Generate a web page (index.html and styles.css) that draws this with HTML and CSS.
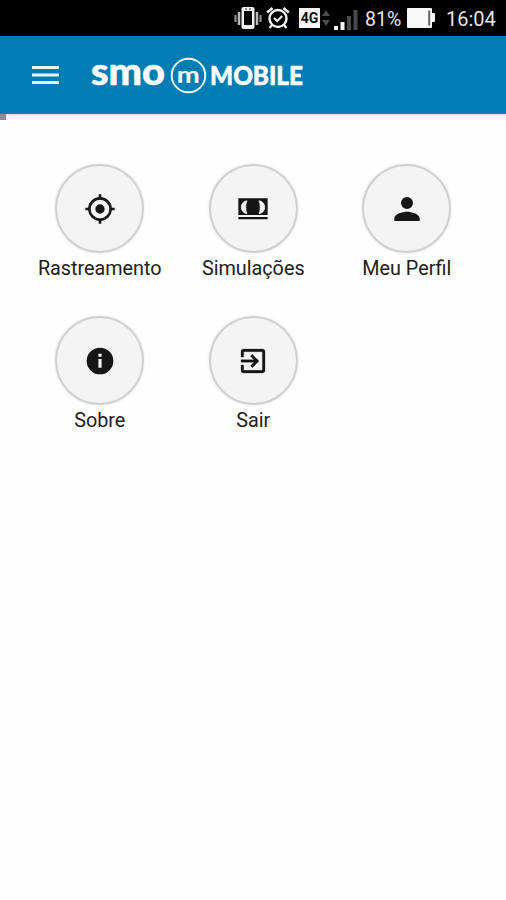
FILE: index.html
```html
<!DOCTYPE html>
<html lang="pt-BR">
<head>
<meta charset="utf-8">
<title>SMO Mobile</title>
<link rel="stylesheet" href="styles.css">
</head>
<body>
<div class="status">
  <svg class="vibrate" width="28" height="26" viewBox="0 0 28 26"><rect x="7.500" y="2" width="13" height="22" rx="2" fill="#f2f2f2"/><rect x="10" y="6" width="8" height="14" fill="#050505"/><path d="M11 4h2M15 4h2" stroke="#222" stroke-width="1"/><path d="M5 7v13M23 7v13" stroke="#bbb" stroke-width="2.500"/><path d="M1.500 10v7M26.500 10v7" stroke="#999" stroke-width="2"/></svg>
  <svg class="alarm" width="24" height="24" viewBox="0 0 24 24" fill="none" stroke="#f2f2f2"><circle cx="12" cy="12.500" r="8.500" stroke-width="2.400"/><path d="M1.200 6.500 6.500 2M22.800 6.500 17.500 2" stroke-width="2.600"/><path d="m8 12 3.200 3 5-5" stroke-width="2"/><path d="m6 19-2.500 3M18 19l2.500 3" stroke-width="2.200"/></svg>
  <span class="network">4G</span>
  <svg class="arrows" width="8" height="20" viewBox="0 0 8 20" fill="#4c4c4c"><path d="M4 2l4 6H0zM4 18l4-6H0z"/></svg>
  <svg class="signal" width="25" height="22" viewBox="0 0 25 22"><path d="M1 18h4v4H1zM7.500 14h4v8h-4z" fill="#f4f4f4"/><path d="M14 8h4v14h-4zM20.500 2h4v20h-4z" fill="#4a4a4a"/></svg>
  <span class="percent">81%</span>
  <svg class="battery" width="28" height="20" viewBox="0 0 28 20"><path d="M1 0h23q1 0 1 1v4h2q1 0 1 1v7q0 1-1 1h-2v5q0 1-1 1H1q-1 0-1-1V1q0-1 1-1z" fill="#f8f8f8"/><path d="M22.200 2.500v15" stroke="#666" stroke-width="2"/></svg>
  <span class="clock">16:04</span>
</div>
<header class="appbar">
  <svg class="menu" width="27" height="20" viewBox="0 0 27 20" fill="#e6f5fb"><path d="M0 1h27v3H0zM0 8.500h27v3H0zM0 16h27v3H0z"/></svg>
  <svg class="logo" width="218" height="60" viewBox="0 -10 218 60">
    <text class="smo" x="1" y="30.200" textLength="74" lengthAdjust="spacingAndGlyphs">smo</text>
    <circle cx="98.500" cy="20.500" r="16.800" fill="none" stroke="#e8f8ff" stroke-width="2"/>
    <text class="em" x="86.800" y="27.600" textLength="23" lengthAdjust="spacingAndGlyphs">m</text>
    <text class="mobile" x="120" y="29.500" textLength="93" lengthAdjust="spacingAndGlyphs">MOBILE</text>
  </svg>
</header>
<div class="progress"><div class="progress-value"></div></div>
<main class="grid">
  <div class="item"><div class="circle"><svg viewBox="0 0 24 24"><path d="M12 8.500a3.500 3.500 0 1 0 0 7 3.500 3.500 0 0 0 0-7zm8.940 2.500A8.990 8.990 0 0 0 13 3.060V1h-2v2.060A8.990 8.990 0 0 0 3.060 11H1v2h2.060A8.990 8.990 0 0 0 11 20.940V23h2v-2.060A8.990 8.990 0 0 0 20.940 13H23v-2zM12 19a7 7 0 1 1 0-14 7 7 0 0 1 0 14z"/></svg></div><span class="label">Rastreamento</span></div>
  <div class="item"><div class="circle"><svg viewBox="0 0 24 24"><path d="M1 4h22v12.500H1zM1 18h22v1.600H1z"/><path d="M7.500 5.800C1.800 6.500 1.800 14.800 7.500 15.500C6.300 13 6.300 8.300 7.500 5.800zM16.500 5.800C22.200 6.500 22.200 14.800 16.500 15.500C17.700 13 17.700 8.300 16.500 5.800z" fill="#f4f4f4" stroke="#f4f4f4" stroke-width=".5"/></svg></div><span class="label">Simulações</span></div>
  <div class="item"><div class="circle"><svg viewBox="0 0 24 24"><path d="M12 12a4.500 4.500 0 1 0 0-9 4.500 4.500 0 0 0 0 9zm0 2c-3 0-9.500 1.500-9.500 5v2h19v-2c0-3.500-6.500-5-9.500-5z"/></svg></div><span class="label">Meu Perfil</span></div>
  <div class="item"><div class="circle"><svg viewBox="0 0 24 24"><path d="M12 2a10 10 0 1 0 0 20 10 10 0 0 0 0-20zm1.200 15h-2.400v-6.500h2.400zm0-8.200h-2.400V6.500h2.400z"/></svg></div><span class="label">Sobre</span></div>
  <div class="item"><div class="circle"><svg viewBox="0 0 24 24"><path d="M10.090 15.590 11.500 17l5-5-5-5-1.410 1.410L12.670 11H3v2h9.670zM19 3H5a2 2 0 0 0-2 2v4h2V5h14v14H5v-4H3v4a2 2 0 0 0 2 2h14a2 2 0 0 0 2-2V5a2 2 0 0 0-2-2z" stroke="#161616" stroke-width=".2"/></svg></div><span class="label">Sair</span></div>
</main>
</body>
</html>
```
FILE: styles.css
```css
body {
  margin: 0;
  min-height: 900px;
  background: #fefefe;
  font-family: Roboto, "Liberation Sans", sans-serif;
  color: #212121;
}

svg {
  display: block;
  flex: none;
}

.status {
  display: flex;
  align-items: center;
  box-sizing: border-box;
  height: 36px;
  padding-left: 234px;
  background: #000;
  color: #e6e6e6;
  font-size: 20px;
  white-space: nowrap;
}

.alarm { margin-left: 4px; }

.network {
  width: 21px;
  height: 20px;
  margin-left: 9px;
  background: #f5f5f5;
  color: #111;
  font-size: 14px;
  font-weight: 700;
  line-height: 21px;
  text-align: center;
}

.arrows { margin-left: 2px; }
.signal { margin: 2px 0 0 3px; }

.percent {
  width: 38px;
  margin: 2px 0 0 7px;
  font-size: 19.500px;
}

.battery { margin-left: 4px; }

.clock {
  margin: 2px 0 0 11px;
  font-size: 20px;
}

.appbar {
  display: flex;
  align-items: center;
  box-sizing: border-box;
  height: 78px;
  padding-left: 32px;
  background: #027db4;
}

.logo { margin: 0 0 1px 31px; }

.logo text {
  fill: #fff;
  stroke: #fff;
  stroke-linejoin: round;
  font-family: Lato, "Open Sans", sans-serif;
}

.smo {
  font-size: 37px;
  font-weight: 900;
  stroke-width: .5;
}

.em {
  font-size: 22px;
  font-weight: 700;
  stroke-width: .1;
}

.mobile {
  font-size: 26px;
  font-weight: 900;
  stroke-width: .5;
}

.progress {
  height: 6px;
  background: linear-gradient(#d5dde1, #f1f1f3 2px, #f5f5f7 4px, #fefefe);
}

.progress-value {
  width: 6px;
  height: 6px;
  background: #888f91;
}

.grid {
  display: grid;
  grid-template-columns: repeat(3, 153.500px);
  grid-auto-rows: 152px;
  padding: 44px 0 0 23px;
}

.item {
  display: flex;
  flex-direction: column;
  align-items: center;
}

.circle {
  display: flex;
  align-items: center;
  justify-content: center;
  box-sizing: border-box;
  width: 89px;
  height: 89px;
  border: 2px solid #d0d0d0;
  border-radius: 50%;
  background: #f4f4f4;
  box-shadow: 0 0 3px #e2e2e2;
}

.circle svg {
  width: 32px;
  height: 32px;
  fill: #161616;
}

.label {
  margin-top: 4px;
  font-size: 19.800px;
  line-height: 24px;
}
```
